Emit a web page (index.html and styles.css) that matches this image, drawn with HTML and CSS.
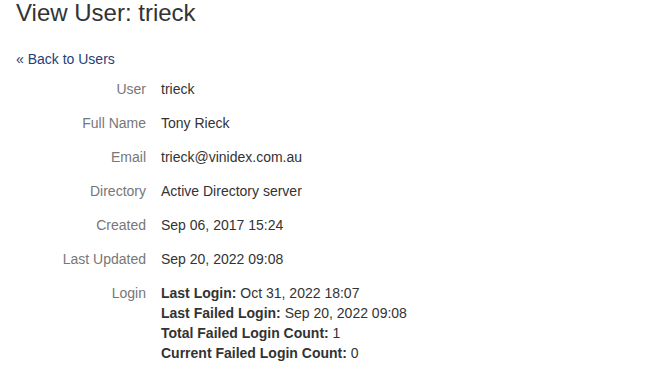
FILE: index.html
```html
<!DOCTYPE html>
<html lang="en">
<head>
<meta charset="utf-8">
<title>View User: trieck</title>
<link rel="stylesheet" href="styles.css">
</head>
<body>
<div class="page">
  <h1 class="title">View User: trieck</h1>
  <p class="back"><a href="#" class="back-link">&laquo; Back to Users</a></p>
  <dl class="details">
    <dt>User</dt><dd>trieck</dd>
    <dt>Full Name</dt><dd>Tony Rieck</dd>
    <dt>Email</dt><dd>trieck@vinidex.com.au</dd>
    <dt>Directory</dt><dd>Active Directory server</dd>
    <dt>Created</dt><dd>Sep 06, 2017 15:24</dd>
    <dt>Last Updated</dt><dd>Sep 20, 2022 09:08</dd>
    <dt>Login</dt>
    <dd>
      <div><strong>Last Login:</strong> Oct 31, 2022 18:07</div>
      <div><strong>Last Failed Login:</strong> Sep 20, 2022 09:08</div>
      <div><strong>Total Failed Login Count:</strong> 1</div>
      <div><strong>Current Failed Login Count:</strong> 0</div>
    </dd>
  </dl>
</div>
</body>
</html>
```
FILE: styles.css
```css
html, body {
  margin: 0;
  padding: 0;
  background: #fff;
}
body {
  font-family: "Liberation Sans", Arial, sans-serif;
  font-size: 14px;
  line-height: 20px;
  color: #333;
}
.page {
  padding: 0 16px;
}
.title {
  margin: 0;
  font-size: 24px;
  font-weight: 400;
  line-height: 26.4px;
  color: #333;
}
.back {
  margin: 22.6px 0 0;
}
.back-link {
  color: #1f4078;
  text-decoration: none;
}
.details {
  display: grid;
  grid-template-columns: 130px 1fr;
  column-gap: 15px;
  margin: 3px 0 0;
}
.details dt {
  text-align: right;
  color: #777;
  padding: 7px 0;
}
.details dd {
  margin: 0;
  padding: 7px 0;
  color: #333;
}
.details strong {
  font-weight: 700;
}
```
